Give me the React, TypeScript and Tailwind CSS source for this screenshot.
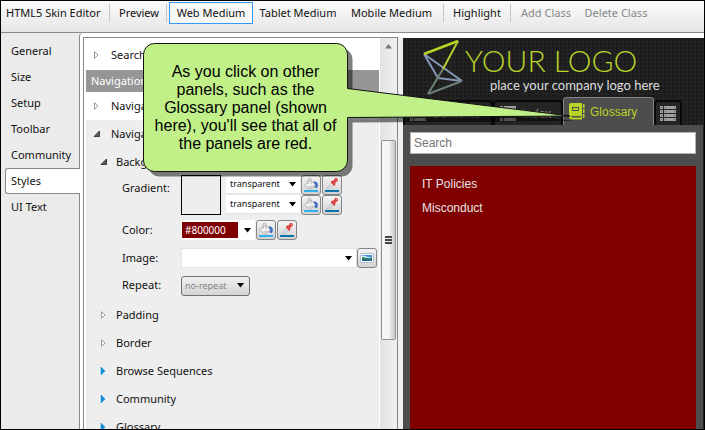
import type { ReactNode } from "react";

const uiFont = "font-['Noto_Sans','Open_Sans',sans-serif]";

function ToolButton({ children, className = "" }: { children: ReactNode; className?: string }) {
  return (
    <button type="button" className={`h-[22px] shrink-0 whitespace-nowrap border pt-px ${className}`}>
      {children}
    </button>
  );
}

function Separator() {
  return <span className="mx-[3px] h-[18px] w-px shrink-0 bg-[#c6c6c6]" />;
}

function Toolbar() {
  return (
    <header className="flex h-8 shrink-0 items-start border-b border-[#898989] bg-linear-to-b from-[#fbfbfb] to-[#e6e6e6] pt-px">
      <div className="flex items-center">
        <h1 className="w-[108px] shrink-0 whitespace-nowrap pl-[5px] pt-px">HTML5 Skin Editor</h1>
        <span className="h-[18px] w-px bg-[#c6c6c6]" />
        <ToolButton className="ml-[3px] w-[52px] border-transparent">Preview</ToolButton>
        <span className="ml-px h-[18px] w-px bg-[#c6c6c6]" />
        <ToolButton className="ml-0.5 w-[84px] border-[#3399ff] bg-[#f8f8f8]">Web Medium</ToolButton>
        <ToolButton className="w-[90px] border-transparent">Tablet Medium</ToolButton>
        <ToolButton className="w-[97px] border-transparent">Mobile Medium</ToolButton>
        <Separator />
        <ToolButton className="w-[60px] border-transparent">Highlight</ToolButton>
        <Separator />
        <ToolButton className="w-[64px] border-transparent text-[#888]">Add Class</ToolButton>
        <ToolButton className="w-[76px] border-transparent text-[#888]">Delete Class</ToolButton>
      </div>
    </header>
  );
}

function Sections() {
  const names = ["General", "Size", "Setup", "Toolbar", "Community", "Styles", "UI Text"];
  return (
    <nav className="w-[78px] shrink-0 bg-[#ebebeb] pt-[5px]">
      <ul>
        {names.map((name) => (
          <li key={name} className="h-[26px]">
            <button
              type="button"
              className={
                name === "Styles"
                  ? "relative z-10 ml-1 h-[26px] w-[75px] rounded-l-[3px] border border-r-0 border-[#898989] bg-white pl-[5px] text-left"
                  : "h-[26px] w-full pl-2.5 text-left"
              }
            >
              {name}
            </button>
          </li>
        ))}
      </ul>
    </nav>
  );
}

function Marker({ kind }: { kind: "closed" | "open" | "blue" }) {
  if (kind === "open") {
    return (
      <svg width="8" height="8" viewBox="0 0 8 8" aria-hidden="true">
        <path d="M6.500 1v5.500H1z" fill="#595959" stroke="#262626" strokeWidth=".8" />
      </svg>
    );
  }
  return (
    <svg width="8" height="8" viewBox="0 0 8 8" aria-hidden="true">
      {kind === "blue" ? (
        <path d="M1 0v8l4-4z" fill="#1191dc" stroke="#0a83cc" strokeWidth=".5" />
      ) : (
        <path d="M1.500 .7v6.600L5 4z" fill="#fff" stroke="#989898" />
      )}
    </svg>
  );
}

function TreeRow({ kind, label, indent = false }: { kind: "closed" | "open" | "blue"; label: string; indent?: boolean }) {
  return (
    <button
      type="button"
      className={`flex h-7 w-full items-center text-left ${indent ? "gap-2 pl-3.5" : "gap-2.5 pl-[7px]"}`}
    >
      <Marker kind={kind} />
      {label}
    </button>
  );
}

const iconButton =
  "flex h-5 w-5 shrink-0 items-center justify-center rounded-[3px] border border-[#858585] bg-linear-to-b from-[#f4f4f4] to-[#d2d2d2]";

function FillButton({ label }: { label: string }) {
  return (
    <button type="button" aria-label={label} className={iconButton}>
      <svg width="16" height="16" viewBox="0 0 16 16" className="shrink-0" aria-hidden="true">
        <path d="M10.500 4.500c3.500-.5 5 2 4 5.500-1 1.500-2.500 1.500-3-.5z" fill="#3a6cc4" />
        <path d="M1.500 8l6-5 5 5-5.500 4.500z" fill="#f5f5f5" stroke="#a5a5a5" strokeWidth=".8" />
        <path d="M5 7V2.500c0-1.800 3-1.800 3 0V7" fill="none" stroke="#b0b0b0" />
        <path d="M4.500 9.500L11 8l-4 3.500z" fill="#c9c9c9" />
        <path d="M1 13h14v2H1z" fill="#31b1ec" />
      </svg>
    </button>
  );
}

function PickButton({ label }: { label: string }) {
  return (
    <button type="button" aria-label={label} className={iconButton}>
      <svg width="16" height="16" viewBox="0 0 16 16" className="shrink-0" aria-hidden="true">
        <path d="M3 11.500l5.500-6 1.500 1.500-5.500 5z" fill="#eef4fa" stroke="#a3acb6" strokeWidth=".8" />
        <path d="M7 4l2.500-.5L11 1.200c1.200-1.200 3.700.8 2.800 2.500l-2.300 2-.5 2.800-1 .5L7 5.500z" fill="#dd4545" />
        <path d="M11.500 1.800l1.500 1" stroke="#f6a0a0" strokeWidth=".8" />
        <path d="M1 13h14v2H1z" fill="#0d74a8" />
      </svg>
    </button>
  );
}

function Arrow() {
  return (
    <svg width="7" height="5" viewBox="0 0 7 5" className="pointer-events-none shrink-0" aria-hidden="true">
      <path d="M0 0h7L3.500 4.500z" fill="#000" />
    </svg>
  );
}

function TransparentSelect({ label }: { label: string }) {
  return (
    <div className="grid h-[19px] w-[74px] items-center border-b border-[#dde0ea] bg-white">
      <select
        aria-label={label}
        className="col-start-1 row-start-1 h-[18px] w-full appearance-none bg-transparent pl-1 text-[9px]"
      >
        <option>transparent</option>
      </select>
      <span className="pointer-events-none col-start-1 row-start-1 mr-1 justify-self-end">
        <Arrow />
      </span>
    </div>
  );
}

function BackgroundForm() {
  return (
    <form className="-mt-px flex flex-col pb-0.5 pl-9">
      <div className="flex h-[41px]">
        <span className="w-[59px] pt-[5px]">Gradient:</span>
        <span className="h-10 w-10 border border-black" />
        <div className="ml-[5px] flex flex-col gap-px">
          {["Gradient start", "Gradient end"].map((name) => (
            <div key={name} className="flex h-[19px] items-center gap-px">
              <TransparentSelect label={name} />
              <FillButton label={`${name} fill`} />
              <PickButton label={`${name} picker`} />
            </div>
          ))}
        </div>
      </div>
      <div className="flex h-7 items-center">
        <label htmlFor="color" className="w-[59px]">
          Color:
        </label>
        <div className="flex h-5 w-[74px] items-center bg-white pl-px">
          <input id="color" defaultValue="#800000" className="h-4 w-14 bg-[#800000] pl-[3px] text-[10px] text-white" />
          <span className="ml-1.5">
            <Arrow />
          </span>
        </div>
        <div className="ml-px flex gap-px">
          <FillButton label="Color fill" />
          <PickButton label="Color picker" />
        </div>
      </div>
      <div className="flex h-7 items-center">
        <label htmlFor="image" className="w-[59px]">
          Image:
        </label>
        <div className="grid h-5 w-44 items-center border border-[#e0e3ea] bg-white">
          <select id="image" className="col-start-1 row-start-1 h-[18px] w-full appearance-none bg-transparent" />
          <span className="pointer-events-none col-start-1 row-start-1 mr-1 justify-self-end">
            <Arrow />
          </span>
        </div>
        <button type="button" aria-label="Browse image" className={iconButton}>
          <svg width="14" height="12" viewBox="0 0 14 12" aria-hidden="true">
            <path d="M.5 1.500h13v9H.5z" fill="#f8fbff" stroke="#b5c3d2" />
            <path d="M2 3h10v3H2z" fill="#4b91dd" />
            <path d="M2 4c3-1 4 1 10 2v1H2z" fill="#ccecff" />
            <path d="M2 5c3 0 5 2 10 1v2H2z" fill="#277d49" />
            <path d="M2 7.500h10V9H2z" fill="#31629c" />
          </svg>
        </button>
      </div>
      <div className="flex h-[27px] items-center">
        <label htmlFor="repeat" className="w-[59px]">
          Repeat:
        </label>
        <div className="grid h-5 w-[69px] items-center rounded-[3px] border border-[#707070] bg-linear-to-b from-[#f0f0f0] to-[#d5d5d5]">
          <select
            id="repeat"
            className="col-start-1 row-start-1 h-[18px] w-full appearance-none bg-transparent pl-[3px] text-[9px] text-[#858585]"
          >
            <option>no-repeat</option>
          </select>
          <span className="pointer-events-none col-start-1 row-start-1 mr-[5px] justify-self-end">
            <Arrow />
          </span>
        </div>
      </div>
    </form>
  );
}

function StyleTree() {
  return (
    <section className="flex w-[315px] shrink-0 border border-b-0 border-[#828790] bg-white">
      <div className="min-w-0 flex-1 overflow-hidden pl-0.5 pr-px">
        <div className="pb-px pt-[3px]">
          <TreeRow kind="closed" label="Search" />
        </div>
        <h2 className="flex h-[22px] items-center bg-[#969696] pl-[5px] text-white">Navigation</h2>
        <TreeRow kind="closed" label="Navigation" />
        <div className="bg-[#eee]">
          <TreeRow kind="open" label="Navigation" />
          <TreeRow kind="open" label="Background" indent />
          <BackgroundForm />
          <TreeRow kind="closed" label="Padding" indent />
          <TreeRow kind="closed" label="Border" indent />
          <TreeRow kind="blue" label="Browse Sequences" indent />
          <TreeRow kind="blue" label="Community" indent />
          <TreeRow kind="blue" label="Glossary" indent />
        </div>
      </div>
      <div className="flex w-[17px] flex-col items-center bg-linear-to-r from-[#e3e3e3] to-[#f0f0f0]">
        <svg width="7" height="5" viewBox="0 0 7 5" className="mt-1.5" aria-hidden="true">
          <path d="M0 4.500L3.500 0 7 4.500z" fill="#777" />
        </svg>
        <div className="mt-[91px] flex h-[200px] w-[15px] flex-col items-center justify-center gap-px rounded-[2px] border border-[#929292] bg-linear-to-r from-[#f5f5f5] from-50% to-[#c9c9ca]">
          <span className="h-0.5 w-[7px] bg-[#444]" />
          <span className="h-0.5 w-[7px] bg-[#444]" />
          <span className="h-0.5 w-[7px] bg-[#444]" />
        </div>
      </div>
    </section>
  );
}

function BookIcon() {
  return (
    <svg width="16" height="17" viewBox="0 0 16 17" className="shrink-0" aria-hidden="true">
      <path
        fillRule="evenodd"
        d="M2 0h11v13H3.500c-2 0-2 1.500 0 1.500H12V13h1v3.500H3C1 16.500 0 15.500 0 14V2C0 .7.700 0 2 0zM3 4v4h7V4zM4 5h5v2H4z"
        fill="#b9d326"
      />
      <path d="M14 1h1.500v4H14zM14 6h1.500v4H14zM14 11h1.500v4H14z" fill="#b9d326" />
    </svg>
  );
}

function GridIcon() {
  return (
    <svg width="16" height="16" viewBox="0 0 16 16" className="shrink-0" aria-hidden="true">
      <path d="M0 0h3v3H0zM4 0h12v3H4zM0 4h3v3H0zM4 4h12v3H4zM0 8h3v3H0zM4 8h12v3H4zM0 12h3v3H0zM4 12h12v3H4z" fill="#a0a0a0" />
      <path d="M1 1h1v1H1zM5 1h1v1H5zM14 1h1v1h-1zM1 5h1v1H1zM5 5h1v1H5zM14 5h1v1h-1zM1 9h1v1H1zM5 9h1v1H5zM14 9h1v1h-1zM1 13h1v1H1zM5 13h1v1H5zM14 13h1v1h-1z" fill="#666" />
    </svg>
  );
}

function Preview() {
  const tab = "flex h-[25px] items-center gap-1.5 rounded-t-[4px] border-2 border-b-0 border-[#080808] bg-[#242424] text-[#8b8b8b]";
  return (
    <section className="mt-px flex min-w-0 flex-1 flex-col bg-[#222] bg-[radial-gradient(#191919_1px,transparent_1px)] bg-size-[4px_4px] pr-px font-['Liberation_Sans',Arial,sans-serif] text-xs">
      <div className="flex h-[59px] shrink-0">
        <svg width="42" height="59" viewBox="0 0 42 59" className="ml-5 shrink-0" fill="none" strokeWidth="2" aria-hidden="true">
          <path d="M1 16L15 40M15 40l24 3M1 16l38 27" stroke="#8496b6" />
          <path d="M5 56l34-13" stroke="#6b7f77" />
          <path d="M35 3L20 31" stroke="#b5cb2d" />
          <path d="M20 31L5 56" stroke="#6b8370" />
          <path d="M1 16L35 3" stroke="#b9d326" strokeWidth="2.500" />
        </svg>
        <div className="shrink-0 font-[Lato,sans-serif]">
          <p className="whitespace-nowrap pt-1 text-[30px] leading-9 font-light text-[#b9d326]">YOUR LOGO</p>
          <p className="whitespace-nowrap pl-[25px] text-[13px] leading-[14px] text-[#dedede]">place your company logo here</p>
        </div>
      </div>
      <div className="flex h-7 shrink-0 items-end">
        <button type="button" className={`${tab} w-[90px] pl-[5px]`}>
          <GridIcon />
          Contents
        </button>
        <button type="button" className={`${tab} w-[70px] pl-[5px]`}>
          <GridIcon />
          Index
        </button>
        <button
          type="button"
          className="flex h-7 w-[91px] items-center gap-[5px] rounded-t-[4px] border border-b-0 border-[#858585] bg-[#4d4d4d] pl-[5px] text-[#b9d326]"
        >
          <BookIcon />
          Glossary
        </button>
        <button type="button" aria-label="More panels" className={`${tab} w-7 pl-1`}>
          <GridIcon />
        </button>
      </div>
      <div className="flex min-h-0 flex-1 flex-col bg-[#4d4d4d] px-[7px] pt-[7px]">
        <input
          aria-label="Search"
          placeholder="Search"
          className="h-[22px] w-full shrink-0 border border-[#b5b5b5] bg-white pl-[3px] placeholder:text-[#737373]"
        />
        <ul className="mt-3 flex-1 bg-[#800000] pl-3 pt-1.5 leading-6 text-[#e4e4e4]">
          <li>IT Policies</li>
          <li>Misconduct</li>
        </ul>
      </div>
    </section>
  );
}

function Callout() {
  const outline =
    "M11.500 .5H193.500a11 11 0 0 1 11 11V45.500L427 73 204.500 74.500V117.500a11 11 0 0 1-11 11H11.500a11 11 0 0 1-11-11V11.500a11 11 0 0 1 11-11z";
  return (
    <aside className="absolute left-[142px] top-[42px] h-[129px] w-[205px] font-['Liberation_Sans',Arial,sans-serif]">
      <svg width="436" height="136" viewBox="0 0 436 136" className="absolute left-0 top-0 max-w-none" aria-hidden="true">
        <path d={outline} transform="translate(5 5)" fill="#000" fillOpacity=".5" />
        <path d={outline} fill="#c1f088" stroke="#111" />
      </svg>
      <p className="relative pt-5 text-center text-base leading-[18px] text-black">
        As you click on other
        <br />
        panels, such as the
        <br />
        Glossary panel (shown
        <br />
        here), you'll see that all of
        <br />
        the panels are red.
      </p>
    </aside>
  );
}

export default function App() {
  return (
    <div className={`relative flex h-screen flex-col overflow-hidden border border-black bg-white text-[11px] text-[#111] ${uiFont}`}>
      <Toolbar />
      <div className="flex min-h-0 flex-1 bg-[#ebebeb]">
        <Sections />
        <main className="flex min-w-0 flex-1 rounded-tl-[4px] border-l border-[#898989] bg-white pl-[3px] pt-1">
          <StyleTree />
          <div className="w-[5px] shrink-0 bg-[#f0f0f0]" />
          <Preview />
        </main>
      </div>
      <Callout />
    </div>
  );
}
